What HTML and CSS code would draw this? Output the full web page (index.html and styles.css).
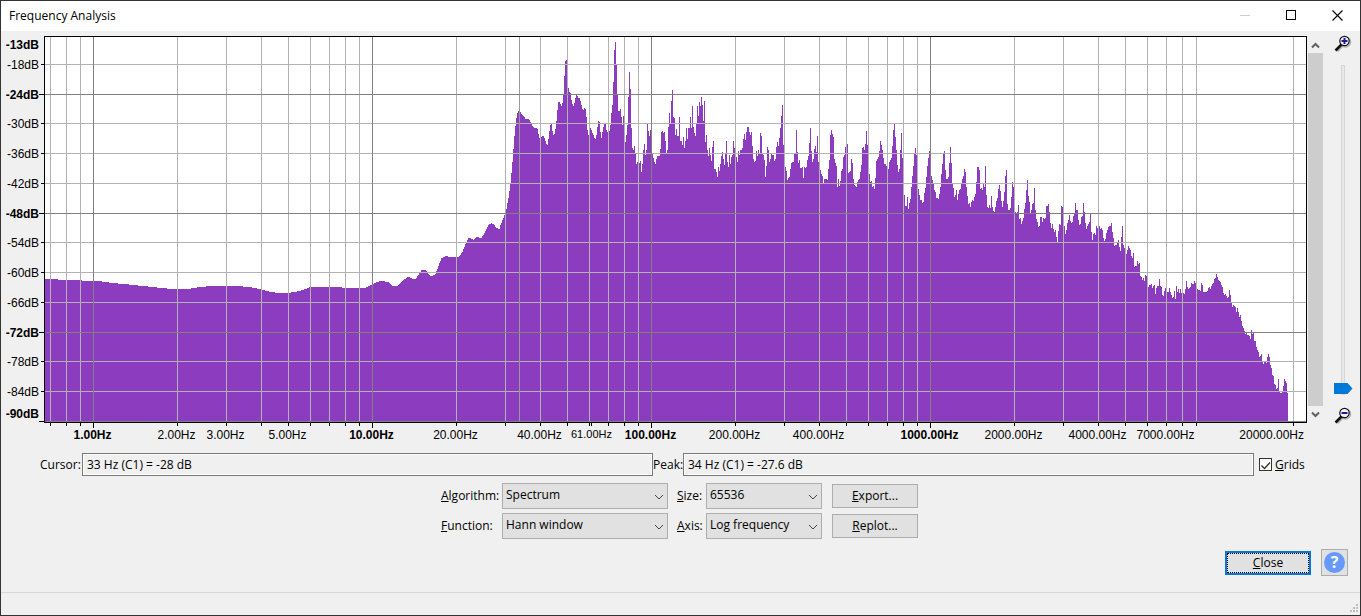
FILE: index.html
```html
<!DOCTYPE html>
<html lang="en">
<head>
  <meta charset="UTF-8">
  <meta name="viewport" content="width=device-width, initial-scale=1.0">
  <title>Frequency Analysis</title>
  <link rel="stylesheet" href="styles.css">
</head>
<body>
  <div class="window">
    <header class="titlebar">
      <h1>Frequency Analysis</h1>
      <div class="window-buttons">
        <button type="button" aria-label="Minimize" disabled>
          <svg width="11" height="11" shape-rendering="crispEdges"><path d="M0 5.5h10" stroke="#ccc"/></svg>
        </button>
        <button type="button" aria-label="Maximize">
          <svg width="11" height="11" shape-rendering="crispEdges"><path d="M.5 .5h9v9h-9z" fill="none" stroke="#000"/></svg>
        </button>
        <button type="button" aria-label="Close window">
          <svg width="11" height="11"><path d="M.5 .5l10 10M10.5 .5l-10 10" stroke="#000" stroke-width="1.1"/></svg>
        </button>
      </div>
    </header>

    <!-- Spectrum plot -->
    <main>
      <section class="analysis">
        <svg id="chart" class="chart" role="img" aria-label="Spectrum"></svg>

        <div class="scrollbar">
          <button type="button" aria-label="Scroll up">
            <svg width="9" height="7"><path d="M1 5.5l3.500-3.500 3.500 3.500" fill="none" stroke="#606060" stroke-width="2"/></svg>
          </button>
          <div class="scroll-thumb"></div>
          <button type="button" aria-label="Scroll down">
            <svg width="9" height="7"><path d="M1 1.500l3.500 3.500 3.500-3.500" fill="none" stroke="#606060" stroke-width="2"/></svg>
          </button>
        </div>

        <div class="zoom">
          <svg width="18" height="18" viewBox="0 0 18 18">
            <path d="M3 16l6-6" stroke="#b0b0b0" stroke-width="3"/>
            <circle cx="11.500" cy="7" r="5" fill="none" stroke="#b0b0b0" stroke-width="1.500"/>
            <path d="M1.500 15.500l6-6" stroke="#111" stroke-width="2.500"/>
            <circle cx="10.500" cy="6" r="4.700" fill="#f4f4ff" stroke="#111" stroke-width="1.200"/>
            <path d="M7.500 6h6M10.500 3v6" stroke="#1a1aa6" stroke-width="2"/>
          </svg>
          <input type="range" min="0" max="100" value="0" aria-label="Vertical zoom">
          <svg width="18" height="18" viewBox="0 0 18 18">
            <path d="M3 16l6-6" stroke="#b0b0b0" stroke-width="3"/>
            <circle cx="11.500" cy="7" r="5" fill="none" stroke="#b0b0b0" stroke-width="1.500"/>
            <path d="M1.500 15.500l6-6" stroke="#111" stroke-width="2.500"/>
            <circle cx="10.500" cy="6" r="4.700" fill="#f4f4ff" stroke="#111" stroke-width="1.200"/>
            <path d="M7.500 6h6" stroke="#1a1aa6" stroke-width="2"/>
          </svg>
        </div>
      </section>

      <!-- Cursor and peak readout -->
      <section class="readout">
        <label class="cursor-label" for="cursor">Cursor:</label>
        <input type="text" id="cursor" value="33 Hz (C1) = -28 dB" readonly>
        <label class="peak-label" for="peak">Peak:</label>
        <input type="text" id="peak" value="34 Hz (C1) = -27.6 dB" readonly>
        <label class="check">
          <input type="checkbox" id="grids" checked>
          <svg class="tick" width="13" height="13"><path d="M2.500 6.500l3 3 5.500-6" fill="none" stroke="#333" stroke-width="1.400"/></svg>
          <span><u>G</u>rids</span>
        </label>
      </section>

      <!-- Options -->
      <section class="options">
        <label for="algorithm"><u>A</u>lgorithm:</label>
        <div class="select">
          <select id="algorithm"><option>Spectrum</option></select>
          <svg class="arrow" width="10" height="6"><path d="M1 1l4 4 4-4" fill="none" stroke="#444"/></svg>
        </div>
        <label class="second" for="size"><u>S</u>ize:</label>
        <div class="select">
          <select id="size"><option>65536</option></select>
          <svg class="arrow" width="10" height="6"><path d="M1 1l4 4 4-4" fill="none" stroke="#444"/></svg>
        </div>
        <button type="button" class="button"><u>E</u>xport...</button>

        <label for="function"><u>F</u>unction:</label>
        <div class="select">
          <select id="function"><option>Hann window</option></select>
          <svg class="arrow" width="10" height="6"><path d="M1 1l4 4 4-4" fill="none" stroke="#444"/></svg>
        </div>
        <label class="second" for="axis"><u>A</u>xis:</label>
        <div class="select">
          <select id="axis"><option>Log frequency</option></select>
          <svg class="arrow" width="10" height="6"><path d="M1 1l4 4 4-4" fill="none" stroke="#444"/></svg>
        </div>
        <button type="button" class="button"><u>R</u>eplot...</button>
      </section>

      <section class="actions">
        <button type="button" class="button close"><span><u>C</u>lose</span></button>
        <button type="button" class="help" aria-label="Help"><span>?</span></button>
      </section>
    </main>

    <footer class="statusbar">
      <svg width="9" height="9" shape-rendering="crispEdges" fill="#bfbfbf">
        <path d="M6 0h2v2h-2zM3 3h2v2h-2zM6 3h2v2h-2zM0 6h2v2h-2zM3 6h2v2h-2zM6 6h2v2h-2z"/>
      </svg>
    </footer>
  </div>

  <script src="chart.js"></script>
</body>
</html>
```
FILE: styles.css
```css
* {
  box-sizing: border-box;
}

body {
  margin: 0;
  font-family: "Open Sans", "Noto Sans", sans-serif;
  font-size: 12px;
  line-height: 16px;
  color: #000;
}

.window {
  display: flex;
  flex-direction: column;
  min-height: 100vh;
  background: #f0f0f0;
  border: 1px solid #333;
}

button,
input,
select {
  font: inherit;
  color: inherit;
  margin: 0;
}

/* Title bar */
.titlebar {
  display: flex;
  justify-content: space-between;
  align-items: center;
  height: 30px;
  padding-left: 8px;
  background: #fff;
}

.titlebar h1 {
  margin: 0;
  font-size: 12px;
  font-weight: normal;
}

.window-buttons {
  display: flex;
}

.window-buttons button {
  display: flex;
  justify-content: center;
  align-items: center;
  width: 46px;
  height: 30px;
  padding: 0 0 2px;
  background: none;
  border: none;
}

/* Plot */
.analysis {
  display: flex;
  height: 415px;
}

.chart {
  flex: 1;
  min-width: 0;
  height: 415px;
  font-family: "Liberation Sans", Arial, sans-serif;
  font-size: 12px;
}

.chart .bold {
  font-weight: bold;
}

.chart .small {
  font-size: 11px;
}

.scrollbar {
  display: flex;
  flex-direction: column;
  width: 15px;
  height: 385px;
  margin: 6px 0 0 1px;
}

.scrollbar button {
  display: flex;
  justify-content: center;
  align-items: center;
  height: 16px;
  padding: 0;
  background: none;
  border: none;
}

.scroll-thumb {
  flex: 1;
  background: #cdcdcd;
}

.zoom {
  display: flex;
  flex-direction: column;
  align-items: center;
  width: 37px;
  padding: 4px 0 0 2px;
}

.zoom input {
  appearance: none;
  writing-mode: vertical-lr;
  direction: rtl;
  width: 20px;
  height: 330px;
  margin: 12px 0;
  background: none;
}

.zoom input::-webkit-slider-runnable-track {
  width: 4px;
  background: #e7eaea;
  border: 1px solid #d6d6d6;
}

.zoom input::-webkit-slider-thumb {
  appearance: none;
  width: 19px;
  height: 11px;
  margin-left: -8px;
  background: #0078d7;
  clip-path: polygon(0 0, 74% 0, 100% 50%, 74% 100%, 0 100%);
}

/* Readout */
.readout {
  display: flex;
  align-items: center;
  margin-top: 7px;
  padding: 0 53px 0 39px;
}

.cursor-label {
  width: 42px;
  white-space: nowrap;
}

.peak-label {
  width: 30px;
  white-space: nowrap;
}

.readout input[type="text"] {
  flex: 1;
  min-width: 0;
  height: 23px;
  padding: 0 4px 1px;
  background: #f0f0f0;
  border: 1px solid #7a7a7a;
  box-shadow: inset 0 0 0 1px #fff;
  outline: none;
}

.check {
  position: relative;
  display: flex;
  align-items: center;
  gap: 3px;
  width: 48px;
  margin-left: 5px;
}

.check input {
  appearance: none;
  width: 13px;
  height: 13px;
  background: #fff;
  border: 1px solid #333;
}

.tick {
  position: absolute;
  left: 0;
  top: 2px;
  pointer-events: none;
}

.check input:not(:checked) + .tick {
  display: none;
}

/* Options */
.options {
  display: grid;
  grid-template-columns: 61px 166px 38px 116px 96px;
  row-gap: 4px;
  justify-content: center;
  align-items: center;
  margin-top: 7px;
  padding-right: 2px;
}

.options .second {
  padding-left: 9px;
  white-space: nowrap;
}

.select {
  position: relative;
}

.select select {
  display: block;
  appearance: none;
  width: 100%;
  height: 26px;
  padding: 0 20px 2px 3px;
  background: #e1e1e1;
  border: 1px solid #adadad;
  border-radius: 0;
}

.select .arrow {
  position: absolute;
  right: 4px;
  top: 11px;
  pointer-events: none;
}

.button {
  width: 86px;
  height: 24px;
  padding: 0;
  background: #e1e1e1;
  border: 1px solid #adadad;
}

.options .button {
  margin-left: 10px;
}

/* Bottom buttons */
.actions {
  display: flex;
  justify-content: flex-end;
  align-items: center;
  gap: 10px;
  margin-top: 10px;
  padding-right: 12px;
}

.close {
  border: 2px solid #0078d7;
}

.close span {
  display: flex;
  justify-content: center;
  align-items: center;
  height: 20px;
  border: 1px dotted #000;
}

.help {
  display: flex;
  justify-content: center;
  align-items: center;
  width: 27px;
  height: 27px;
  padding: 0;
  background: #e1e1e1;
  border: 1px solid #adadad;
}

.help span {
  width: 21px;
  height: 21px;
  border-radius: 50%;
  background: #69f;
  color: #fff;
  font-size: 16px;
  font-weight: bold;
  line-height: 21px;
}

.statusbar {
  display: flex;
  justify-content: flex-end;
  align-items: flex-end;
  height: 23px;
  margin-top: auto;
  padding: 0 1px 2px;
  border-top: 1px solid #d7d7d7;
}
```
FILE: chart.js
```js
const chart = document.getElementById('chart');
const grids = document.getElementById('grids');

const LEFT = 43;
const TOP = 5;
const BOTTOM = 391;
const BASE_WIDTH = 1262;

// Low end of the spectrum is smooth, so [x, y] points are enough
const low = [
  [45, 279], [57, 279], [58, 280], [81, 280], [82, 281], [98, 281], [112, 283], [124, 284],
  [133, 285], [143, 286], [152, 287], [161, 288], [173, 289], [187, 289], [200, 287],
  [210, 286], [238, 286], [248, 287], [255, 288], [262, 290], [271, 292], [278, 293],
  [287, 293], [294, 292], [302, 290], [310, 287], [341, 287], [342, 288], [365, 288],
  [372, 284], [376, 282], [381, 281], [388, 282], [392, 286], [397, 286], [403, 280],
  [407, 277], [409, 277], [412, 279], [415, 279], [419, 273], [421, 270], [425, 270],
  [430, 276], [432, 276], [435, 274], [438, 266], [441, 258], [445, 256], [450, 257],
  [458, 257], [462, 252], [465, 244], [468, 238], [470, 238], [473, 240], [476, 237],
  [481, 238], [484, 233], [488, 225], [491, 223], [493, 224], [496, 228], [499, 229],
  [500, 225]
];

// One value per column from here on
const high = [
  225, 223, 220, 218, 215, 214, 209, 203, 198, 191, 184, 173, 162, 149, 136, 126, 118, 113, 111, 111,
  112, 114, 115, 116, 117, 119, 119, 119, 119, 120, 122, 124, 126, 127, 128, 128, 128, 129, 134, 138,
  138, 137, 136, 136, 138, 141, 144, 145, 139, 131, 125, 124, 131, 135, 134, 129, 121, 110, 102, 102,
  104, 106, 103, 94, 76, 61, 60, 88, 88, 92, 93, 100, 104, 106, 103, 98, 95, 96, 98, 98,
  101, 105, 109, 110, 108, 109, 117, 130, 135, 135, 128, 130, 133, 135, 138, 139, 135, 127, 121, 122,
  132, 138, 132, 127, 124, 124, 130, 132, 132, 131, 125, 113, 105, 82, 50, 42, 65, 95, 111, 111,
  109, 117, 125, 116, 125, 142, 135, 125, 97, 72, 89, 128, 148, 150, 146, 154, 164, 162, 163, 163,
  161, 172, 164, 150, 144, 155, 150, 124, 131, 136, 130, 150, 153, 158, 162, 164, 159, 156, 156, 156,
  149, 132, 131, 133, 132, 141, 153, 150, 127, 113, 123, 101, 90, 117, 118, 135, 129, 136, 136, 117,
  141, 141, 145, 137, 148, 141, 128, 139,
  128, 128, 117, 128, 106, 127, 133, 136, 123, 106, 116, 102, 106, 97, 105, 121, 101, 142, 135, 150,
  156, 148, 155, 161, 147, 141, 169, 169, 172, 177, 167, 171, 164, 156, 152, 159, 165, 153, 141, 162,
  167, 155, 164, 157, 155, 141, 148, 153, 157, 162, 151, 155, 150, 150, 148, 139, 134, 140, 132, 127,
  127, 132, 135, 132, 146, 159, 162, 161, 151, 156, 150, 153, 133, 136, 153, 155, 160, 177, 166, 147,
  150, 162, 159, 154, 155, 155, 161, 159, 147, 142, 146, 138, 128, 116, 105, 145, 160, 167, 171, 180,
  178, 177, 169, 163, 162, 162, 153, 153, 130, 152, 163, 160, 168, 168, 167, 178, 167, 168, 167, 160,
  156, 143, 128, 151, 162, 159, 149, 146, 152, 136, 162, 166, 170, 174, 176, 183, 179, 179, 179, 180,
  169, 160, 135, 130, 134, 137, 159, 163, 166, 187, 179, 186, 181, 171, 169, 157, 155, 147, 153, 144,
  173, 172, 171, 159, 163, 179, 185, 186, 187, 182, 180, 179, 172, 165, 148, 147, 150, 144, 131, 145,
  165, 174, 182, 181, 187, 186, 189, 178, 161, 159, 157, 151, 141, 145, 150, 158, 164, 164, 166, 168,
  169, 162, 160, 158, 146, 130, 124, 137, 150, 165, 172, 169, 150, 133, 158, 183, 195, 206, 206, 197,
  209, 203, 199, 187, 176, 166, 154, 148, 155, 183, 189, 195, 200, 200, 203, 202, 193, 188, 177, 166,
  158, 151, 167, 176, 180, 184, 190, 192, 198, 198, 199, 194, 187, 174, 164, 154, 151, 170, 179, 179,
  177, 163, 147, 163, 183, 188, 197, 195, 190, 200, 194, 190, 189, 183, 179, 176, 169, 172, 187, 196,
  204, 203, 207, 202, 200, 201, 197, 194, 182, 167, 167, 170, 189, 188, 190, 184, 187, 166, 195, 207,
  208, 205, 208, 196, 207, 211, 212, 207, 201, 198, 189, 185, 191, 201, 207, 201, 192, 176, 170, 204,
  210, 210, 208, 197, 182, 187, 210, 212, 213, 212, 205, 219, 218, 224, 221, 218, 209, 203, 190, 180,
  196, 202, 213, 210, 204, 203, 188, 210, 219, 222, 227, 226, 217, 217, 222, 218, 219, 218, 206, 206,
  204, 212, 223, 228, 224, 229, 232, 230, 237, 242, 231, 224, 225, 206, 207, 220, 226, 234, 230, 223,
  220, 215, 221, 223, 222, 216, 213, 203, 210, 210, 220, 225, 224, 217, 216, 203, 212, 223, 229, 226,
  224, 222, 214, 232, 240, 234, 233, 235, 226, 228, 226, 226, 229, 228, 230, 238, 241, 239, 233, 230,
  227, 226, 226, 223, 232, 238, 246, 245, 245, 243, 240, 247, 251, 237, 226, 245, 248, 252, 254, 250,
  246, 248, 250, 256, 258, 253, 267, 266, 266, 261, 264, 263, 276, 277, 280, 278, 281, 275, 276, 281,
  287, 285, 285, 284, 288, 286, 285, 294, 288, 286, 286, 279, 286, 287, 295, 296, 291, 288, 290, 292,
  292, 288, 292, 295, 298, 297, 291, 299, 286, 292, 289, 293, 289, 293, 293, 293, 294, 289, 281, 287,
  289, 288, 287, 283, 284, 284, 281, 283, 285, 289, 290, 290, 291, 283, 285, 292, 292, 292, 292, 291,
  288, 287, 289, 286, 284, 283, 279, 278, 274, 277, 280, 281, 282, 285, 287, 293, 295, 294, 296, 298,
  297, 290, 295, 302, 307, 305, 306, 307, 312, 308, 312, 317, 315, 321, 326, 328, 331, 334, 333, 335,
  335, 336, 339, 330, 334, 333, 341, 341, 347, 350, 352, 357, 356, 354, 361, 364, 362, 362, 363, 357,
  354, 357, 365, 368, 375, 376, 384, 385, 389, 388, 379, 391, 393, 393, 392, 386, 379, 381, 383, 393
];

// Fill in every column of the low part
function buildColumns() {
  const columns = [];
  for (let i = 0; i < low.length - 1; i++) {
    const [x1, y1] = low[i];
    const [x2, y2] = low[i + 1];
    for (let x = x1; x < x2; x++) {
      columns.push(Math.round(y1 + (y2 - y1) * (x - x1) / (x2 - x1)));
    }
  }
  return columns.concat(high).map(y => y - 31);
}

const columns = buildColumns();

function line(x1, y1, x2, y2, color) {
  return `<path d="M${x1} ${y1}L${x2} ${y2}" stroke="${color}" shape-rendering="crispEdges"/>`;
}

function text(x, y, label, anchor, cls) {
  return `<text x="${x}" y="${y}" text-anchor="${anchor}" class="${cls}">${label}</text>`;
}

function draw() {
  const width = chart.clientWidth;
  const right = width - 1;
  const scale = (right - LEFT) / BASE_WIDTH;
  const freqX = f => Math.round(LEFT + (49 + 279 * Math.log10(f)) * scale);
  const dbY = db => Math.round(32.9 + (db - 18) * 29.75 / 6);
  let out = `<path d="M${LEFT} ${TOP}H${right}V${BOTTOM}H${LEFT}z" fill="#fff"/>`;

  // Spectrum
  let d = `M${LEFT + 1} ${BOTTOM}`;
  columns.forEach((y, i) => {
    d += `V${y}H${LEFT + 1 + (i + 1) * scale}`;
  });
  out += `<path d="${d}V${BOTTOM}z" fill="#8c3cbe" shape-rendering="crispEdges"/>`;

  // Frequency grid and ticks
  const labels = [1, 2, 3, 5, 10, 20, 40, 100, 200, 400, 1000, 2000, 4000, 7000, 20000];
  let major = '';
  for (let decade = -1; decade < 5; decade++) {
    for (let n = 1; n < 10; n++) {
      const f = n * Math.pow(10, decade);
      if (f < 0.69 || f > 20000 || f === 10000) continue;
      const x = freqX(f) + 0.5;
      const isMajor = n === 1;
      if (grids.checked) {
        const grid = line(x, TOP, x, BOTTOM, isMajor ? '#808080' : '#b2b2b2');
        if (isMajor) major += grid;
        else out += grid;
      }
      out += line(x, BOTTOM, x, BOTTOM + (isMajor ? 6 : 4), '#000');
      if (labels.includes(f)) {
        const anchor = f === 20000 ? 'end' : 'middle';
        const lx = f === 20000 ? right - 2 : x - 1;
        out += text(lx, 408, f.toFixed(2) + 'Hz', anchor, isMajor ? 'bold' : '');
      }
    }
  }

  // Level grid and ticks
  for (let db = 18; db <= 90; db += 6) {
    const y = dbY(db) + 0.5;
    const isMajor = db % 24 === 0 || db === 90;
    if (grids.checked) {
      const grid = line(LEFT, y, right, y, isMajor ? '#808080' : '#b2b2b2');
      if (isMajor) major += grid;
      else out += grid;
    }
    out += line(LEFT - (isMajor ? 5 : 3), y, LEFT, y, '#000');
    out += text(38, db === 90 ? 387 : y + 4, `-${db}dB`, 'end', isMajor ? 'bold' : '');
  }
  out += text(38, 18, '-13dB', 'end', 'bold');

  // Peak and cursor markers
  const peak = freqX(33.6) + 0.5;
  const cursor = freqX(61) + 0.5;
  out += line(peak, TOP, peak, BOTTOM, '#999');
  out += line(cursor, BOTTOM, cursor, BOTTOM + 4, '#000');
  out += text(cursor, 407, '61.00Hz', 'middle', 'small');

  out += major;
  out += `<path d="M${LEFT + 0.5} ${TOP + 0.5}H${right + 0.5}V${BOTTOM + 0.5}H${LEFT + 0.5}z" fill="none" stroke="#000" shape-rendering="crispEdges"/>`;
  chart.innerHTML = out;
}

grids.addEventListener('change', draw);
window.addEventListener('resize', draw);
draw();
```
